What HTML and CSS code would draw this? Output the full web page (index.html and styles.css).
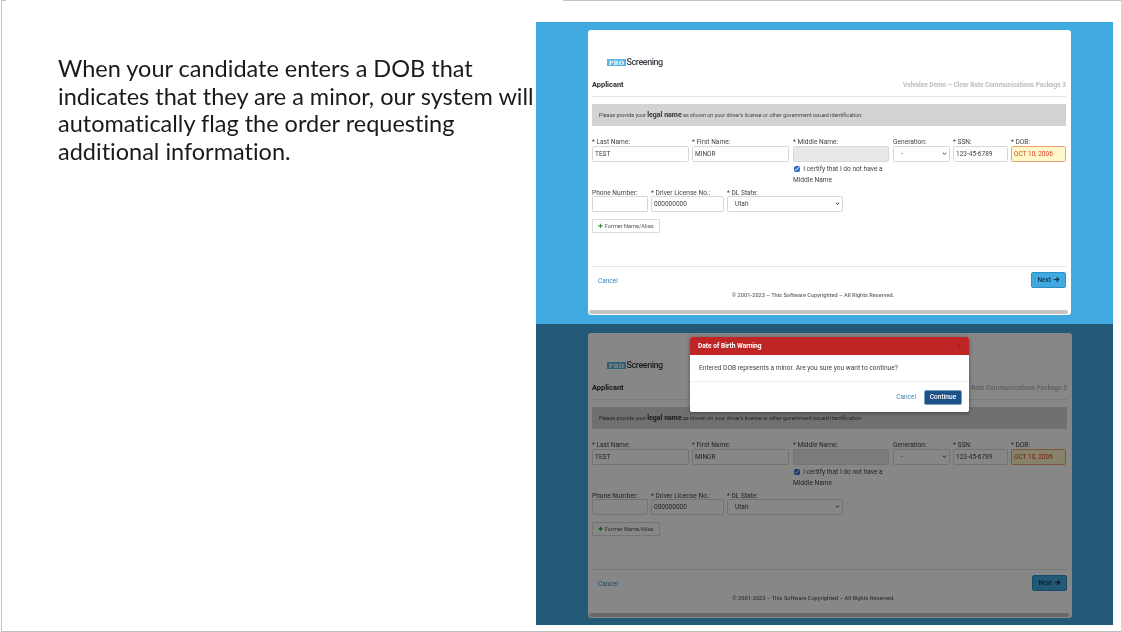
FILE: index.html
```html
<!DOCTYPE html>
<html lang="en">
<head>
<meta charset="utf-8">
<title>Date of Birth Warning</title>
<link rel="stylesheet" href="styles.css">
</head>
<body>
<div class="slide">
  <div class="edge"><span class="edge-a"></span><span class="edge-b"></span></div>
  <div class="main">
    <div class="intro"><p class="intro-text">When your candidate enters a DOB that indicates that they are a minor, our system will automatically flag the order requesting additional information.</p></div>
    <div class="shots">
      <section class="shot shot-light">
        <div class="card">
          <div class="logo"><span class="logo-pro">PRO</span><span class="logo-name">Screening</span></div>
          <div class="head"><strong class="head-title">Applicant</strong><span class="head-pkg">Velvalee Demo – Clear Rate Communications Package 3</span></div>
          <div class="notice">Please provide your <b class="notice-b">legal name</b> as shown on your driver's license or other government issued identification.</div>
          <div class="row">
            <label class="field f-last">* Last Name:<input class="inp" value="TEST"></label>
            <label class="field f-first">* First Name:<input class="inp" value="MINOR"></label>
            <div class="field f-mid">* Middle Name:<input class="inp inp-off" disabled>
              <div class="cert"><input type="checkbox" class="chk" checked> I certify that I do not have a Middle Name</div>
            </div>
            <label class="field f-gen">Generation:<select class="inp sel"><option>-</option></select></label>
            <label class="field f-ssn">* SSN:<input class="inp" value="123-45-6789"></label>
            <label class="field f-dob">* DOB:<input class="inp inp-warn" value="OCT 10, 2006"></label>
          </div>
          <div class="row row-2">
            <label class="field f-phone">Phone Number:<input class="inp"></label>
            <label class="field f-dl">* Driver License No.:<input class="inp" value="000000000"></label>
            <label class="field f-state">* DL State:<select class="inp sel"><option>Utah</option></select></label>
          </div>
          <button class="alias"><span class="plus">✚</span> Former Name/Alias</button>
          <div class="foot"><a class="cancel">Cancel</a><button class="next">Next <svg class="arrow" viewBox="0 0 10 10"><path d="M1 5h7M5 1.8 8.2 5 5 8.2" fill="none" stroke="currentColor" stroke-width="1.6"/></svg></button></div>
          <div class="copy">© 2001-2023 – This Software Copyrighted – All Rights Reserved.</div>
          <div class="scroll"></div>
        </div>
      </section>
      <section class="shot shot-dark">
        <div class="card">
          <div class="logo"><span class="logo-pro">PRO</span><span class="logo-name">Screening</span></div>
          <div class="head"><strong class="head-title">Applicant</strong><span class="head-pkg">Velvalee Demo – Clear Rate Communications Package 3</span></div>
          <div class="notice">Please provide your <b class="notice-b">legal name</b> as shown on your driver's license or other government issued identification.</div>
          <div class="row">
            <label class="field f-last">* Last Name:<input class="inp" value="TEST"></label>
            <label class="field f-first">* First Name:<input class="inp" value="MINOR"></label>
            <div class="field f-mid">* Middle Name:<input class="inp inp-off" disabled>
              <div class="cert"><input type="checkbox" class="chk" checked> I certify that I do not have a Middle Name</div>
            </div>
            <label class="field f-gen">Generation:<select class="inp sel"><option>-</option></select></label>
            <label class="field f-ssn">* SSN:<input class="inp" value="123-45-6789"></label>
            <label class="field f-dob">* DOB:<input class="inp inp-warn" value="OCT 10, 2006"></label>
          </div>
          <div class="row row-2">
            <label class="field f-phone">Phone Number:<input class="inp"></label>
            <label class="field f-dl">* Driver License No.:<input class="inp" value="000000000"></label>
            <label class="field f-state">* DL State:<select class="inp sel"><option>Utah</option></select></label>
          </div>
          <button class="alias"><span class="plus">✚</span> Former Name/Alias</button>
          <div class="foot"><a class="cancel">Cancel</a><button class="next">Next <svg class="arrow" viewBox="0 0 10 10"><path d="M1 5h7M5 1.8 8.2 5 5 8.2" fill="none" stroke="currentColor" stroke-width="1.6"/></svg></button></div>
          <div class="copy">© 2001-2023 – This Software Copyrighted – All Rights Reserved.</div>
          <div class="scroll"></div>
        </div>
        <div class="dim"></div>
        <div class="modal">
          <div class="modal-head"><span>Date of Birth Warning</span><span class="modal-x">×</span></div>
          <div class="modal-body">Entered DOB represents a minor. Are you sure you want to continue?</div>
          <div class="modal-foot"><a class="cancel">Cancel</a><button class="continue">Continue</button></div>
        </div>
      </section>
    </div>
  </div>
</div>
</body>
</html>
```
FILE: styles.css
```css
* { box-sizing: border-box; }
html, body { margin: 0; padding: 0; background: #fff; }
body { width: 1121px; height: 632px; overflow: hidden; padding-left: 1px; }

.slide {
  width: 1120px; height: 632px;
  display: flex; flex-direction: column;
  border-left: 1px solid #c4c4c4;
  border-bottom: 1px solid #bdbdbd;
  background: #fff;
}
.edge { display: flex; height: 1px; flex: none; }
.edge-a { width: 4px; background: #c4c4c4; }
.edge-b { width: 558px; margin-left: 557px; background: #c4c4c4; }

.main { display: flex; flex: 1; }
.intro { width: 534px; flex: none; padding: 54px 0 0 56px; }
.intro-text {
  width: 482px; margin: 0;
  font: 400 23.5px/27.6px "Lato", "Open Sans", sans-serif;
  font-variant-ligatures: none;
  color: #1a1a1a;
  filter: blur(.3px);
}
.shots { width: 577px; flex: none; margin-top: 21px; filter: blur(.4px); }

.shot { position: relative; height: 302px; padding: 8px 42px 0 52px; font-family: "Roboto", sans-serif; overflow: hidden; }
.shot-light { background: #3fa9e0; }
.shot-dark { background: #3fa9e0; height: 301px; padding-top: 9px; padding-right: 41px; }

.card {
  height: 285px;
  background: #fff;
  border-radius: 3px;
  padding: 26px 5px 0 4px;
  color: #333;
  font-size: 6.5px;
}

.logo { display: flex; align-items: center; height: 12px; padding-left: 15px; }
.logo-pro {
  width: 19px; height: 7px; background: #58b6e3; color: #fff;
  font: 700 6px/7px "DejaVu Serif", serif; text-align: center; letter-spacing: .2px;
}
.logo-name { font: 500 9px/12px "Roboto", sans-serif; letter-spacing: -.45px; color: #3a3f44; margin-left: .5px; }

.head {
  display: flex; justify-content: space-between; align-items: center;
  margin-top: 11px; height: 18px; padding-bottom: 6px;
  border-bottom: 1px solid #e3e7ea;
}
.head-title { font-size: 7.4px; font-weight: 700; color: #2b2b2b; }
.head-pkg { font-size: 6.45px; font-weight: 700; color: #bcbcbc; }

.notice {
  margin-top: 7px; height: 22px; background: #d3d3d3; padding: 0 7px;
  display: flex; align-items: center; white-space: pre-wrap;
  font-size: 5.4px; color: #444;
}
.notice-b { font-size: 7px; font-weight: 700; color: #333; }

.row { display: flex; margin-top: 12px; height: 40px; gap: 3px; }
.row-2 { margin-top: 11px; height: 26px; }

.field { display: block; flex: none; line-height: 9px; color: #444; font-size: 6.6px; white-space: nowrap; }
.f-last, .f-first { width: 97px; }
.f-first { margin-right: 1px; }
.f-mid { width: 96px; margin-right: 1px; }
.f-gen { width: 57px; }
.f-ssn { width: 55px; }
.f-dob { width: 55px; }
.f-phone { width: 56px; }
.f-dl { width: 73px; }
.f-state { width: 116px; }

.inp {
  display: block; width: 100%; height: 16px; margin: -1px 0 0;
  border: 1px solid #d6d9db; border-radius: 1.5px;
  background: #fff; color: #444; padding: 0 2px;
  font: 400 6.5px "Roboto", sans-serif;
}
.row-2 .inp { margin-top: -2px; }
.inp-off { background: #e8e8e8; }
.inp-warn { background: #fff8c8; border-color: #eda077; color: #d8402a; }
.sel {
  padding-left: 7px;
  appearance: none;
  background-image: url("data:image/svg+xml,%3Csvg xmlns='http://www.w3.org/2000/svg' viewBox='0 0 6 4'%3E%3Cpath d='M1 1l2 2 2-2' fill='none' stroke='%23333' stroke-width='1.2'/%3E%3C/svg%3E");
  background-repeat: no-repeat;
  background-size: 5px 3.4px;
  background-position: right 2.5px center;
}

.cert { white-space: normal; margin-top: 2px; width: 92px; line-height: 10.5px; color: #444; }
.chk { width: 6px; height: 6px; margin: 0 1.5px 0 1px; accent-color: #2a6cc4; vertical-align: -0.5px; }

.alias {
  display: block; margin: 4px 0 0; width: 68px; height: 14px; padding: 0 0 1px;
  background: #fff; border: 1px solid #dcdcdc; border-radius: 1px;
  font: 400 5.6px "Roboto", sans-serif; color: #555; white-space: nowrap;
}
.plus { color: #3d9a40; font-size: 6px; }

.foot {
  display: flex; justify-content: space-between; align-items: center;
  margin-top: 33px; height: 23px; padding: 5px 0 1px 6px;
  border-top: 1px solid #dfe6ec;
}
.cancel { color: #3a84bd; font-size: 6.5px; }
.foot .cancel { margin-top: 1px; }
.next {
  width: 35px; height: 16px; padding: 0; border: 1px solid #2f8fc4; border-radius: 2px;
  background: #3fa9e0; color: #16344a; font: 500 6.5px "Roboto", sans-serif;
}
.arrow { width: 7px; height: 7px; vertical-align: -1px; }

.copy { text-align: center; margin-top: 2px; font-size: 5.6px; font-weight: 500; color: #666; line-height: 8px; padding-right: 32px; }
.scroll { margin: 11px -2px 0 -3px; height: 4px; border-radius: 2px; background: #c4c4c4; }

.dim { position: absolute; inset: 0; background: rgba(0, 0, 0, .47); }
.modal {
  position: absolute; left: 154px; top: 13px; width: 279px; height: 75px;
  background: #fff; border-radius: 2px; box-shadow: 0 1px 4px rgba(0,0,0,.4);
}
.modal-head {
  display: flex; justify-content: space-between; align-items: center;
  height: 18px; padding: 0 8px;
  background: #c02526; color: #fff; font-size: 6.6px; font-weight: 700;
  border-radius: 2px 2px 0 0;
}
.modal-x { color: #8a2020; font-size: 7px; font-weight: 400; }
.modal-body { height: 27px; padding: 0 9px; display: flex; align-items: center; font-size: 6.6px; color: #444; border-bottom: 1px solid #eeeeee; }
.modal-foot { display: flex; justify-content: flex-end; align-items: center; gap: 8px; height: 30px; padding: 0 7px 0 0; }
.continue {
  width: 38px; height: 15px; padding: 0; border: 1px solid #7aa0c0; border-radius: 2px;
  background: #1d5289; color: #fff; font: 500 6.6px "Roboto", sans-serif;
}
```
